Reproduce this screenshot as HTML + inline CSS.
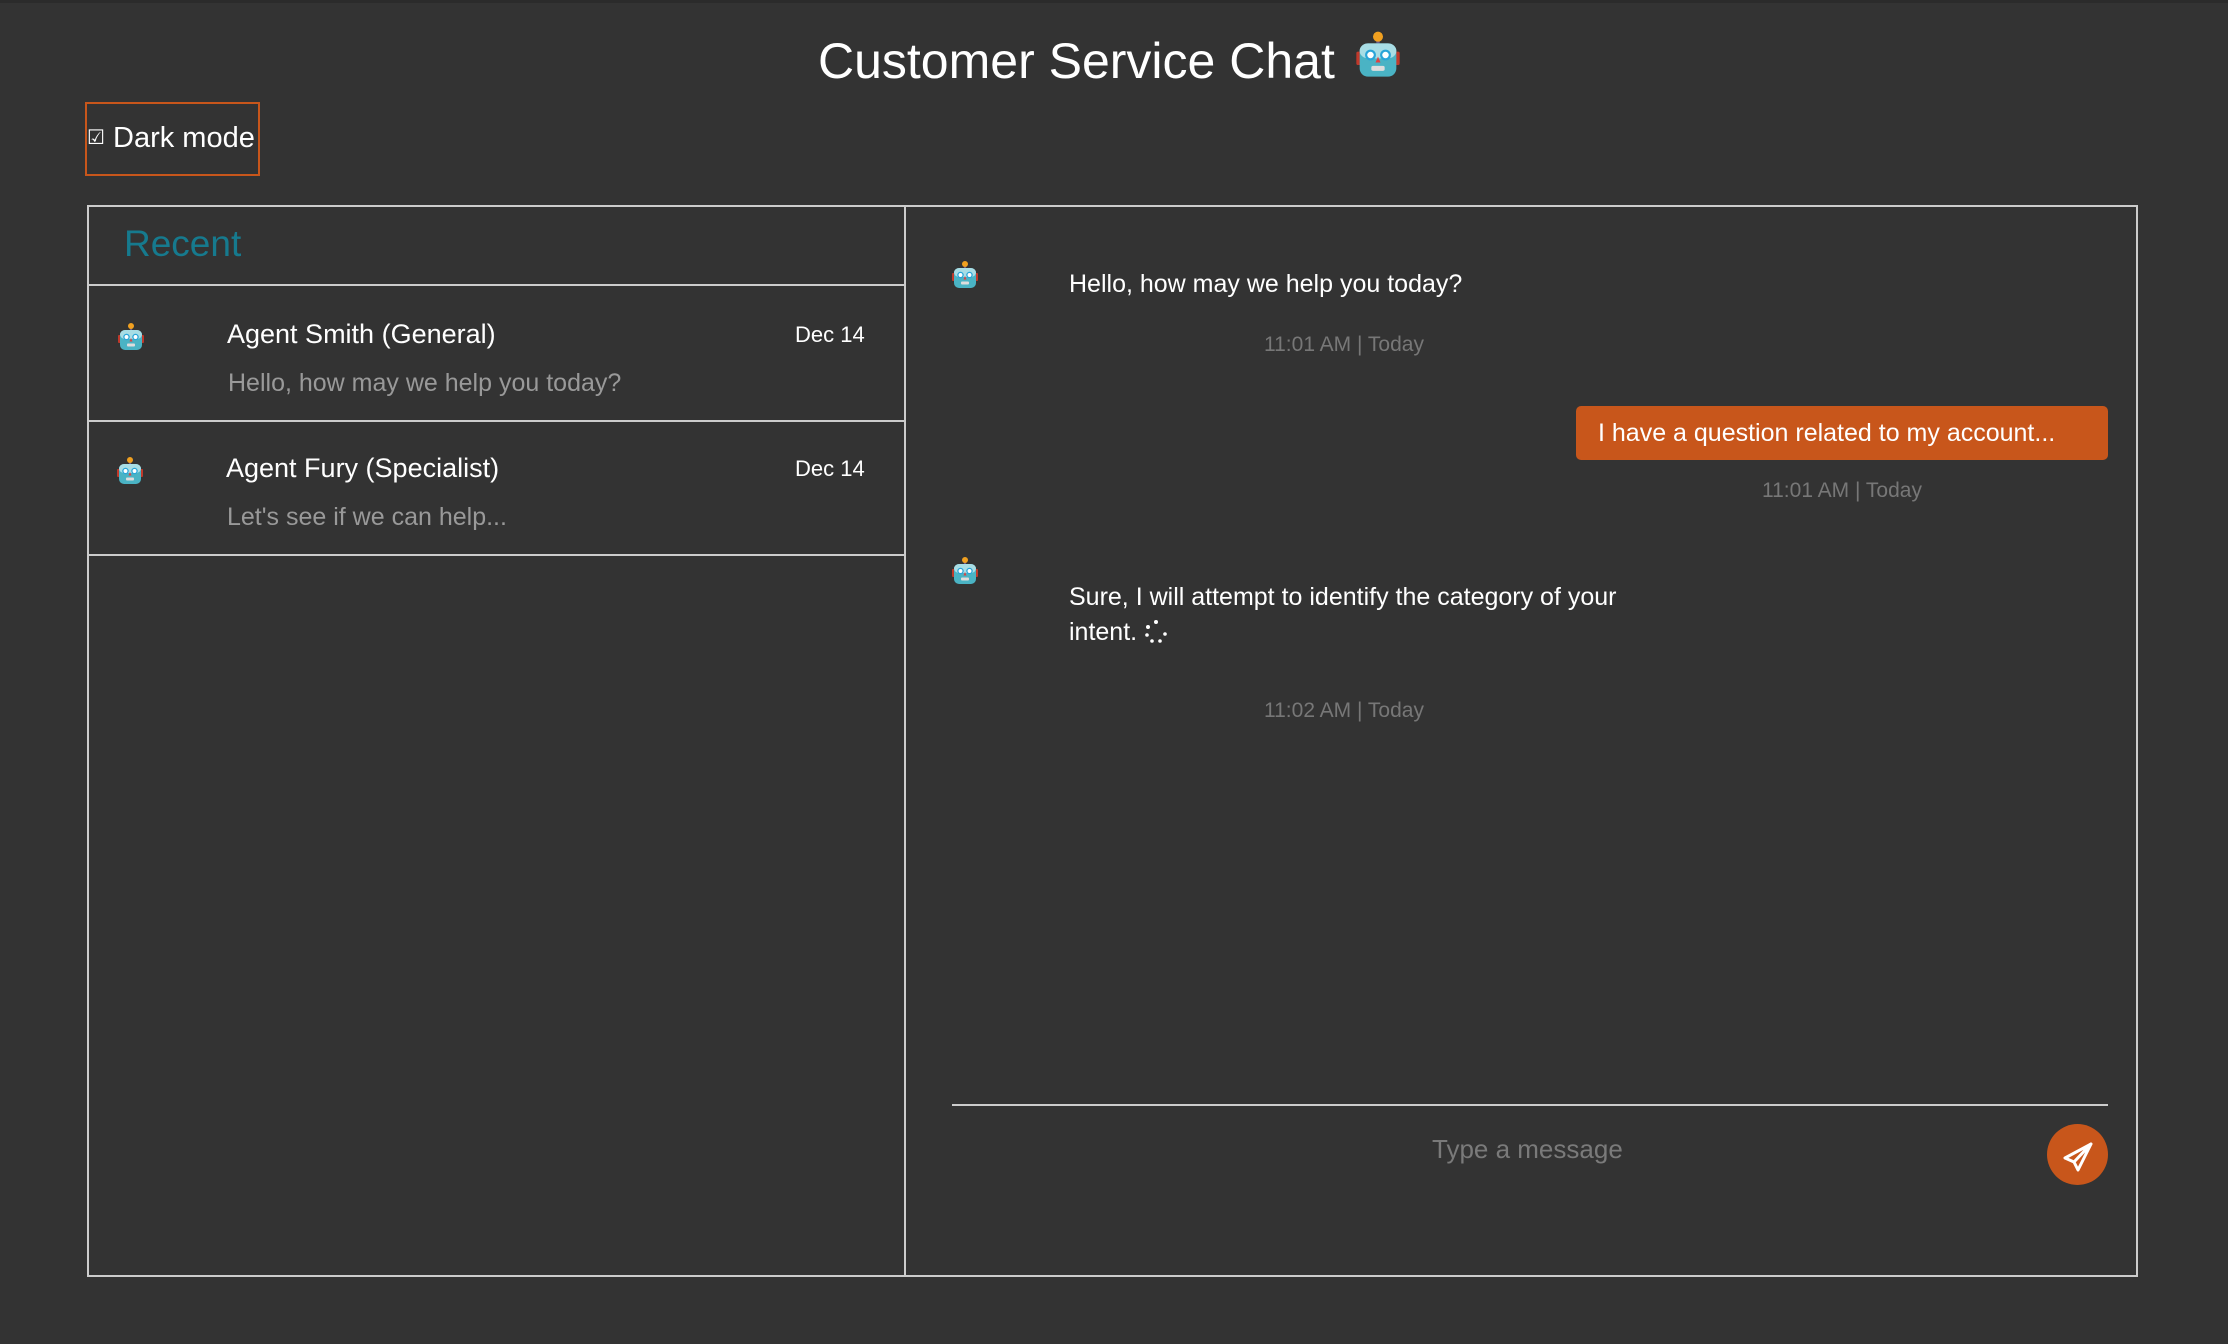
<!DOCTYPE html>
<html><head><meta charset="utf-8"><style>
*{margin:0;padding:0;box-sizing:border-box}
html,body{width:2228px;height:1344px;background:#333;overflow:hidden;font-family:"Liberation Sans",Arial,sans-serif;color:#fff}
.a{position:absolute;white-space:nowrap;line-height:1}
.top{position:absolute;left:0;top:0;width:2228px;height:3px;background:#2b2b2b}
.ts{color:#777;font-size:21px}
.gray{color:#999}
</style></head><body>
<div class="top"></div>
<svg width="0" height="0" style="position:absolute"><defs>
<symbol id="bot" viewBox="0 0 26 30">
<rect x="0" y="13" width="3" height="8" rx="1" fill="#c0392b"/>
<rect x="23" y="13" width="3" height="8" rx="1" fill="#c0392b"/>
<rect x="12" y="3" width="2" height="5" fill="#6a5a8a"/>
<circle cx="13" cy="4" r="3" fill="#f0a020"/>
<rect x="2" y="8" width="22" height="20" rx="5" fill="#4ab3c4"/>
<rect x="2" y="8" width="22" height="9" rx="5" fill="#a8dde5"/>
<circle cx="8.5" cy="15" r="2.6" fill="#fff" stroke="#2aa5d8" stroke-width="1.3"/>
<circle cx="17.5" cy="15" r="2.6" fill="#fff" stroke="#2aa5d8" stroke-width="1.3"/>
<path d="M13 16 L11.5 19.5 H14.5Z" fill="#e04040"/>
<rect x="9" y="21.5" width="8" height="3" rx="1" fill="#ddd"/>
</symbol></defs></svg>

<div class="a" style="left:818px;top:36px;font-size:50px">Customer Service Chat</div>
<svg class="a" style="left:1356px;top:30px" width="44" height="50"><use href="#bot"/></svg>

<div class="a" style="left:85px;top:102px;width:175px;height:74px;border:2px solid #c8561b"></div>
<div class="a" style="left:87px;top:124px;font-size:29px"><span style="font-size:20px;vertical-align:3px">☑</span> Dark mode</div>

<div class="a" style="left:87px;top:205px;width:2051px;height:1072px;border:2px solid #ccc"></div>
<div class="a" style="left:904px;top:205px;width:2px;height:1072px;background:#ccc"></div>
<div class="a" style="left:87px;top:284px;width:818px;height:2px;background:#ccc"></div>
<div class="a" style="left:87px;top:420px;width:818px;height:2px;background:#ccc"></div>
<div class="a" style="left:87px;top:554px;width:818px;height:2px;background:#ccc"></div>

<div class="a" style="left:124px;top:225px;font-size:37px;color:#167a8e">Recent</div>

<svg class="a" style="left:118px;top:322px" width="26" height="30"><use href="#bot"/></svg>
<div class="a" style="left:227px;top:321px;font-size:27px">Agent Smith (General)</div>
<div class="a" style="left:795px;top:324px;font-size:22px">Dec 14</div>
<div class="a gray" style="left:228px;top:371px;font-size:25px">Hello, how may we help you today?</div>

<svg class="a" style="left:117px;top:456px" width="26" height="30"><use href="#bot"/></svg>
<div class="a" style="left:226px;top:455px;font-size:27px">Agent Fury (Specialist)</div>
<div class="a" style="left:795px;top:458px;font-size:22px">Dec 14</div>
<div class="a gray" style="left:227px;top:505px;font-size:25px">Let's see if we can help...</div>

<svg class="a" style="left:952px;top:260px" width="26" height="30"><use href="#bot"/></svg>
<div class="a" style="left:1069px;top:272px;font-size:25px">Hello, how may we help you today?</div>
<div class="a ts" style="left:1264px;top:334px">11:01 AM | Today</div>

<div class="a" style="left:1576px;top:406px;width:532px;height:54px;background:#c8561b;border-radius:5px"></div>
<div class="a" style="left:1598px;top:421px;font-size:25px">I have a question related to my account...</div>
<div class="a ts" style="left:1762px;top:480px">11:01 AM | Today</div>

<svg class="a" style="left:952px;top:556px" width="26" height="30"><use href="#bot"/></svg>
<div class="a" style="left:1069px;top:585px;font-size:25px">Sure, I will attempt to identify the category of your</div>
<div class="a" style="left:1069px;top:620px;font-size:25px">intent.</div>
<svg class="a" style="left:1143px;top:619px" width="26" height="26">
<g fill="#fff"><circle cx="13" cy="3" r="2"/><circle cx="5" cy="8" r="2"/><circle cx="4" cy="16" r="1.8"/><circle cx="9" cy="22" r="1.8"/><circle cx="17" cy="22" r="1.8"/><circle cx="22" cy="15" r="1.8"/></g></svg>
<div class="a ts" style="left:1264px;top:700px">11:02 AM | Today</div>

<div class="a" style="left:952px;top:1104px;width:1156px;height:2px;background:#ccc"></div>
<div class="a" style="left:1432px;top:1136px;font-size:26px;color:#7a7a7a">Type a message</div>
<div class="a" style="left:2047px;top:1124px;width:61px;height:61px;border-radius:50%;background:#c8561b"></div>
<svg class="a" style="left:2047px;top:1124px" width="61" height="61" viewBox="0 0 61 61">
<path d="M44 20 L18 34 L27 38 L31 46 Z M27 38 L44 20" fill="none" stroke="#fff" stroke-width="3" stroke-linejoin="round" stroke-linecap="round"/>
</svg>
</body></html>
